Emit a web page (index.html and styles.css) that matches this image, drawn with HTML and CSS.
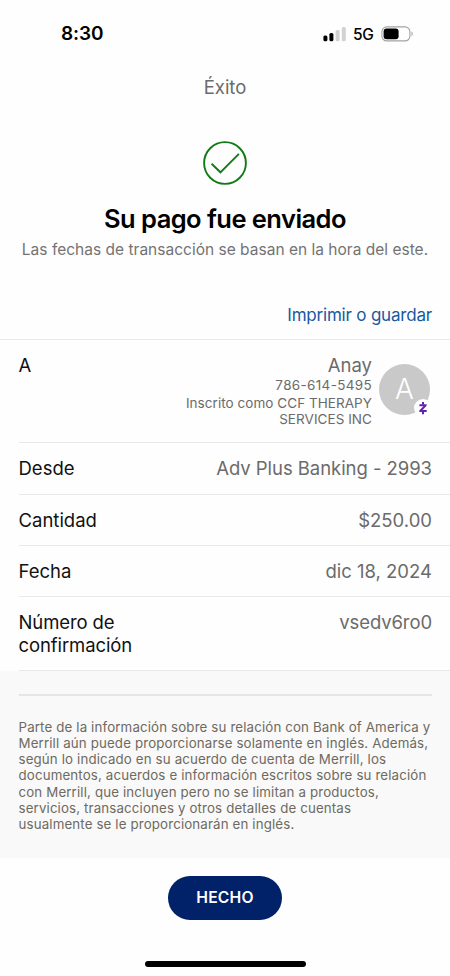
FILE: index.html
```html
<!DOCTYPE html>
<html lang="es">
<head>
<meta charset="utf-8">
<meta name="viewport" content="width=device-width, initial-scale=1">
<title>Éxito</title>
<link rel="stylesheet" href="styles.css">
</head>
<body>
<div class="screen">
  <header class="status">
    <span class="time">8:30</span>
    <div class="indicators">
      <svg class="signal" width="24" height="16" viewBox="0 0 24 16">
        <rect x="0.4" y="9.4" width="4" height="5.8" rx="1.5" fill="#000"/>
        <rect x="6.4" y="7" width="4" height="8.2" rx="1.5" fill="#000"/>
        <rect x="12.6" y="4" width="4" height="11.2" rx="1.5" fill="#d2d2d2"/>
        <rect x="18.8" y="1" width="4" height="14.2" rx="1.5" fill="#d2d2d2"/>
      </svg>
      <span class="network">5G</span>
      <svg class="battery" width="33" height="16" viewBox="0 0 33 16">
        <rect x="0.9" y="0.9" width="28" height="14" rx="4.8" fill="none" stroke="#a3a3a3" stroke-width="1.1"/>
        <rect x="2.6" y="2.6" width="15" height="10.6" rx="3" fill="#000"/>
        <path d="M30.5 5.6c1.6.5 1.6 4.1 0 4.6z" fill="#a3a3a3"/>
      </svg>
    </div>
  </header>
  <div class="title"><span>Éxito</span></div>
  <section class="hero">
    <svg class="check" width="46" height="46" viewBox="0 0 46 46" fill="none" stroke="#117a17" stroke-width="1.9">
      <circle cx="23" cy="23" r="20.9"/>
      <path d="M9.6 23.7l8.8 8.6L36.9 13.8"/>
    </svg>
    <h1>Su pago fue enviado</h1>
    <p>Las fechas de transacción se basan en la hora del este.</p>
  </section>
  <div class="print"><a>Imprimir o guardar</a></div>
  <main class="rows">
    <div class="row payee">
      <span class="label">A</span>
      <div class="recipient">
        <div class="details">
          <span class="name">Anay</span>
          <span class="phone">786-614-5495</span>
          <span class="enrolled">Inscrito como CCF THERAPY<br>SERVICES INC</span>
        </div>
        <div class="avatar">A
          <svg class="zelle" width="18" height="18" viewBox="0 0 18 18">
            <circle cx="9" cy="9" r="9" fill="#fff"/>
            <path d="M5.4 5.3h7.2v1.5L8.6 11h4.1v2H5.3v-1.6l4.1-4.2h-4z" fill="#6420b0"/>
            <path d="M9 3v2.6M9 12.6v2.6" fill="none" stroke="#6420b0" stroke-width="2"/>
          </svg>
        </div>
      </div>
    </div>
    <div class="row from"><span class="label">Desde</span><span class="value account">Adv Plus Banking - 2993</span></div>
    <div class="row"><span class="label">Cantidad</span><span class="value">$250.00</span></div>
    <div class="row"><span class="label">Fecha</span><span class="value">dic 18, 2024</span></div>
    <div class="row confirmation"><span class="label">Número de<br>confirmación</span><span class="value code">vsedv6ro0</span></div>
  </main>
  <section class="notice">
    <hr>
    <p>Parte de la información sobre su relación con Bank of America y<br>Merrill aún puede proporcionarse solamente en inglés. Además,<br>según lo indicado en su acuerdo de cuenta de Merrill, los<br>documentos, acuerdos e información escritos sobre su relación<br>con Merrill, que incluyen pero no se limitan a productos,<br>servicios, transacciones y otros detalles de cuentas<br>usualmente se le proporcionarán en inglés.</p>
  </section>
  <footer>
    <button>HECHO</button>
    <div class="home"></div>
  </footer>
</div>
</body>
</html>
```
FILE: styles.css
```css
* { box-sizing: border-box; }
body { margin: 0; background: #fefefe; color: #111; font-family: Inter, "Liberation Sans", sans-serif; }
.screen { width: 450px; height: 976px; display: flex; flex-direction: column; overflow: hidden; }
.status { height: 67px; flex: none; display: flex; justify-content: space-between; align-items: center; padding: 0 36px 0 61px; color: #000; }
.time { font-size: 19px; font-weight: 600; letter-spacing: -0.1px; }
.indicators { display: flex; align-items: center; }
.network { font-size: 15.5px; font-weight: 500; margin: 1px 7.5px 0 5.5px; letter-spacing: -0.3px; }
.title { height: 41px; flex: none; text-align: center; font-size: 18.5px; line-height: 41px; color: #6b6b6b; }
.hero { height: 187px; flex: none; padding-top: 32px; text-align: center; }
.check { display: block; margin: 0 auto; }
h1 { margin: 17px 0 0; font-size: 25.5px; line-height: 32px; font-weight: 600; letter-spacing: -0.55px; color: #000; }
.hero p { margin: 5px 0 0; font-size: 15.5px; line-height: 20px; color: #737373; letter-spacing: 0.01px; white-space: nowrap; }
.print { height: 44px; flex: none; padding-right: 18px; text-align: right; font-size: 17px; line-height: 41px; letter-spacing: -0.2px; color: #1859a0; }
.rows { flex: none; border-top: 1px solid #e9e9e9; font-size: 18.5px; line-height: 23px; }
.row { height: 51px; margin-left: 18.5px; padding: 14px 18px 0 0; border-bottom: 1px solid #e9e9e9; display: flex; justify-content: space-between; }
.row.payee { height: 103px; padding-right: 20px; }
.row.from { height: 52px; }
.row.confirmation { height: 74px; letter-spacing: -0.1px; }
.value, .details { color: #6b6b6b; }
.account { letter-spacing: -0.05px; }
.recipient { display: flex; gap: 7px; }
.details { display: flex; flex-direction: column; align-items: flex-end; text-align: right; }
.phone { font-size: 13.5px; line-height: 17px; letter-spacing: 0.33px; }
.enrolled { font-size: 13.5px; line-height: 16px; margin-top: 1px; letter-spacing: 0.05px; }
.avatar { position: relative; width: 51px; height: 51px; margin-top: 10px; border-radius: 50%; background: #c9c9c9; color: #fff; text-align: center; font-size: 28px; line-height: 51px; font-weight: 300; }
.zelle { position: absolute; right: -2px; bottom: -2px; }
.notice { height: 187px; flex: none; background: #f9f9f9; padding: 23px 18.5px 0; }
hr { margin: 0; border: 0; height: 1.5px; background: #e5e5e5; }
.notice p { margin: 23px 0 0; font-size: 13.3px; line-height: 16.33px; color: #6e6a60; letter-spacing: 0.14px; white-space: nowrap; }
footer { flex: 1; display: flex; flex-direction: column; align-items: center; padding-top: 18px; }
button { width: 114px; height: 44px; border: 0; border-radius: 22px; background: #012169; color: #fff; font: 600 15.7px Inter, sans-serif; letter-spacing: 0.2px; padding: 0 0 2px; }
.home { width: 161px; height: 6px; border-radius: 3px; background: #000; margin-top: 41px; }
```
